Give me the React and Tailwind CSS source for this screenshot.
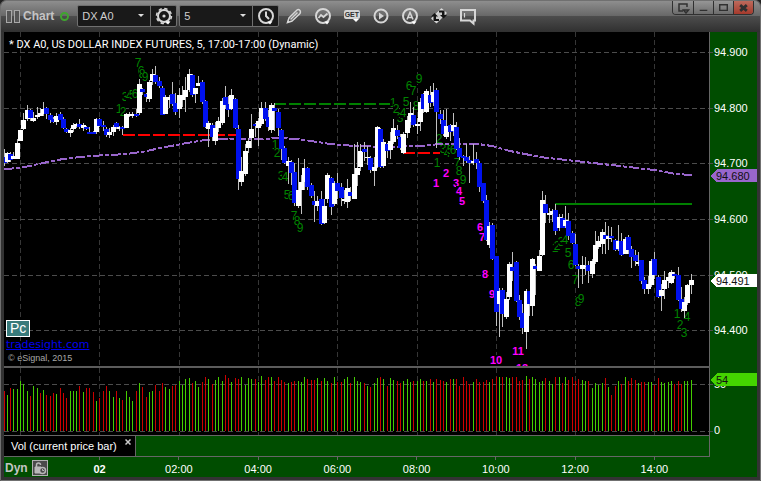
import React, { useState } from "react";
import clsx from "clsx";

const FIRST_X = 4;
const BAR_STEP = 3.304;
const VOLUME_BASE = 431;

// side (u = up, d = down), wick top, body top, body bottom, wick bottom
const candleData = `
d 149 157 163 166,u 152 153 162 163,d 152 154 160 162,u 152 156 159 159,u 139 143 159 159,u 130 130 141 141,
u 113 120 129 130,u 105 110 119 121,d 109 110 118 121,u 112 118 121 122,u 107 115 117 119,u 108 113 116 116,
u 102 109 114 116,d 107 108 114 119,d 113 115 120 123,d 117 119 122 123,u 113 116 122 125,d 112 114 120 120,
d 117 119 128 129,d 128 129 132 133,u 128 130 133 137,u 123 125 129 132,u 123 124 126 128,d 119 124 127 129,
u 123 125 128 131,d 126 127 129 130,d 127 132 134 134,d 131 132 134 134,u 118 119 132 134,d 118 119 126 127,
d 121 125 127 131,d 127 129 135 137,u 128 132 135 138,u 125 127 132 136,d 122 123 127 129,u 126 127 129 131,
d 126 127 129 135,u 113 114 128 128,u 112 114 116 117,u 112 114 116 118,d 109 114 116 117,u 79 84 113 115,
d 88 89 92 95,d 93 94 97 102,u 80 82 99 102,u 69 74 81 85,d 66 75 82 84,d 77 81 86 88,
d 86 88 115 115,u 95 97 114 114,u 95 97 100 108,d 82 94 104 106,d 93 103 112 115,u 88 95 109 118,
u 86 95 100 107,u 77 90 97 112,u 69 74 90 92,d 74 75 95 97,u 88 88 94 103,u 76 83 86 86,
d 80 82 102 104,d 100 101 127 128,u 121 123 129 147,d 123 125 137 141,u 122 128 141 145,u 117 121 128 132,
u 98 101 123 125,d 86 97 105 109,d 96 104 110 117,u 89 95 109 110,d 98 99 128 129,d 125 129 179 190,
u 157 171 182 186,u 144 151 174 176,u 138 141 148 153,u 114 129 138 148,d 123 124 126 137,u 118 121 128 146,
u 102 108 124 126,d 102 108 119 121,d 110 117 127 131,u 103 105 130 133,d 103 108 111 131,d 109 112 128 136,
d 129 130 149 160,d 146 148 163 164,u 157 161 166 184,d 160 162 173 185,d 163 172 203 206,u 158 190 206 208,
u 175 182 190 214,u 159 168 182 190,d 167 168 187 190,d 183 185 196 198,d 191 201 205 222,u 196 201 206 211,
d 191 199 224 225,u 199 206 223 224,u 173 175 199 203,d 177 178 207 215,u 181 183 204 206,d 173 183 191 199,
d 183 187 198 206,u 190 199 201 204,u 179 188 202 208,d 187 192 196 201,u 144 174 199 199,u 142 168 175 186,
u 144 151 167 171,d 142 149 152 161,u 146 157 158 165,d 156 158 170 173,u 157 167 171 186,u 126 127 167 168,
d 128 129 167 168,u 139 142 166 168,d 143 144 151 158,u 132 141 150 159,u 119 128 142 144,d 125 130 136 139,
d 134 137 148 150,u 132 134 153 154,u 116 120 133 138,u 102 113 122 128,d 107 115 125 127,u 118 124 126 134,
u 98 102 122 131,d 93 94 109 113,u 89 91 112 113,d 86 95 103 107,u 83 92 102 106,d 88 90 112 148,
d 110 114 119 124,d 110 120 134 136,u 109 126 137 139,d 124 125 132 141,u 113 125 131 136,d 122 127 149 150,
d 138 148 157 160,d 155 156 158 166,d 144 157 161 163,d 156 160 163 183,u 144 161 163 165,d 152 159 163 169,
d 161 163 187 192,d 183 183 201 203,d 195 200 240 241,u 222 226 245 248,d 223 225 259 260,d 256 256 312 326,
u 288 291 304 337,d 288 290 314 327,u 292 299 317 319,u 262 264 297 300,d 252 267 271 281,d 261 262 301 302,
d 295 300 317 320,d 304 313 328 334,u 289 291 332 349,d 291 291 304 316,u 258 259 306 316,d 264 266 269 295,
u 250 256 271 271,u 191 200 255 256,d 195 204 213 223,u 208 213 215 223,u 209 211 214 222,d 204 210 231 235,
u 214 217 228 231,d 214 218 228 228,u 206 220 226 228,d 213 221 236 240,d 231 233 243 244,d 234 244 265 266,
d 264 266 269 288,u 256 265 269 284,u 257 266 267 275,d 261 265 271 283,u 259 261 274 278,u 231 245 262 264,
u 236 241 247 249,u 229 232 244 254,d 222 235 239 254,u 226 236 239 250,d 227 236 238 242,d 239 240 250 251,
u 225 241 249 251,d 233 241 255 256,u 237 239 254 254,d 235 237 250 254,d 246 249 257 268,d 250 255 261 266,
u 252 262 264 266,d 260 260 281 284,d 277 280 289 294,u 276 284 289 294,u 259 261 285 287,d 252 259 275 279,
d 275 277 297 298,u 284 290 296 311,u 271 280 289 299,u 273 277 281 288,u 270 272 283 284,d 272 274 276 279,
d 267 275 300 301,d 287 299 309 312,u 297 302 311 318,u 284 285 303 305,u 274 280 285 294`;

const candles = candleData.split(",").map((row) => {
  const [side, high, top, bottom, low] = row.trim().split(" ");
  return { side, high: +high, top: +top, bottom: +bottom, low: +low };
});

const volumeData = `
r40 g36 r43 g42 g42 g50 g47 g40 r35 g45 g43 r38 g41 r36 r35 r38 g37 r43 r38 r33 g40 g40 g40 r45 g39 r43 r43 r39 g30 r33
r40 r45 g40 g34 r40 g33 r31 g40 g34 g30 r40 g48 r44 r34 g39 g40 r46 r40 r48 g44 g42 r45 r46 g50 g46 g52 g53 r48 g50 g44
r49 r54 g52 r47 g51 g54 g50 r56 r53 g49 r53 r52 g54 g46 g53 g52 r52 g49 g55 r51 r54 g54 r50 r54 r51 r49 g48 r49 r50 g50
g49 g54 r52 r51 r51 g53 r50 g53 g50 r48 g54 r49 r49 g52 g54 r48 g54 g50 g49 r48 g45 r44 g48 g53 r54 g52 r45 g53 g51 r50
r48 g50 g52 g49 r50 g50 g52 r50 g50 r52 g49 r52 r51 r50 g49 r52 g52 r52 r45 r54 r50 r47 g49 r52 r49 r49 r51 g49 r52 r54
g54 r54 g54 g53 r54 r54 r50 r51 g55 r52 g54 g52 g49 g50 r53 g50 g47 r54 g54 r48 g54 r51 r54 r50 r52 g51 g50 r50 g43 g48
g46 g48 r53 g44 r36 r45 g50 r47 g54 r50 r53 r51 g48 r49 r49 g49 g49 r46 r53 g49 g48 g49 g50 r47 r50 r47 g50 g50 g51`;

const volumes = volumeData
  .trim()
  .split(/\s+/)
  .map((v) => ({ side: v[0], size: Number(v.slice(1)) }));

const average =
  "4,169 20,168 43,163 63,159 90,156 127,154 147,151 160,148 187,143 205,140 230,139 258,139 283,138 305,140 330,144 355,146 390,147 420,146 440,144 478,144 492,146 510,151 540,157 575,161 620,166 654,170 676,174 692,175";

// sequential counts: [text, center x, baseline]
const greenCounts = [
  ["1", 119, 113], ["2", 123, 116], ["3", 125, 101], ["4", 129, 100], ["5", 132, 99], ["6", 135, 98],
  ["7", 138, 67], ["6", 141, 75], ["8", 142, 78], ["9", 145, 81],
  ["1", 275, 149], ["2", 277, 157], ["3", 281, 180], ["4", 285, 181], ["5", 287, 199], ["6", 291, 200],
  ["7", 294, 220], ["8", 297, 225], ["9", 300, 232],
  ["1", 393, 107], ["2", 396, 113], ["3", 400, 122], ["4", 403, 117], ["5", 406, 106], ["6", 409, 90],
  ["7", 413, 95], ["8", 416, 110], ["9", 419, 83],
  ["1", 437, 167], ["2", 439, 143], ["3", 443, 153], ["4", 447, 157], ["5", 450, 154], ["6", 453, 154],
  ["7", 457, 167], ["8", 459, 175], ["9", 463, 184],
  ["1", 555, 252], ["2", 557, 250], ["3", 561, 246], ["4", 565, 244], ["5", 568, 257], ["6", 571, 269],
  ["7", 575, 284], ["8", 578, 306], ["9", 581, 303],
  ["1", 677, 318], ["2", 680, 329], ["3", 684, 337], ["4", 687, 321],
];

const pinkCounts = [
  ["1", 436, 187], ["2", 446, 177], ["3", 456, 187], ["4", 459, 195], ["5", 462, 205], ["6", 480, 231],
  ["7", 482, 241], ["8", 485, 278], ["9", 492, 298], ["10", 496, 364], ["11", 518, 355], ["12", 522, 372],
];

const gridX = [20, 99, 179, 258, 337, 417, 496, 575, 654];
const priceLevels = [
  ["94.900", 52],
  ["94.800", 108],
  ["94.700", 163],
  ["94.600", 219],
  ["94.500", 275],
  ["94.400", 330],
];
const times = ["02", "02:00", "04:00", "06:00", "08:00", "10:00", "12:00", "14:00"];

const barX = (i) => Math.floor(FIRST_X + i * BAR_STEP);

const Counts = ({ items, color, bold }) => (
  <g
    className={clsx(bold ? "text-[11px] font-bold" : "text-[12px]")}
    fill={color}
    textAnchor="middle"
  >
    {items.map(([text, x, y], index) => (
      <g key={index}>
        <rect x={x - 3 * text.length} y={y - 9} width={6 * text.length} height="10" fill="#000" />
        <text x={x} y={y}>
          {text}
        </text>
      </g>
    ))}
  </g>
);

const PriceTag = ({ y, color, label }) => (
  <g>
    <path d={`M710 ${y}L717 ${y - 7}H757V${y + 6}H717Z`} fill={color} />
    <text x="716" y={y + 4} fill="#111">
      {label}
    </text>
  </g>
);

const Chart = () => (
  <svg
    viewBox="4 32 753 403"
    className="block w-full text-[11px]"
    shapeRendering="crispEdges"
    role="img"
    aria-label="US Dollar Index futures"
  >
    <defs>
      <clipPath id="pricePane">
        <rect x="4" y="32" width="705" height="334" />
      </clipPath>
    </defs>
    <rect x="4" y="32" width="706" height="403" fill="#000" />
    <rect x="710" y="32" width="47" height="403" fill="#004d00" />

    <g stroke="#363636" strokeDasharray="5 3">
      {gridX.map((x) => (
        <path key={x} d={`M${x + 0.5} 32V435`} />
      ))}
    </g>
    <g stroke="#4c4c4c" strokeDasharray="5 3">
      {priceLevels.map(([label, y]) => (
        <path key={label} d={`M4 ${y + 0.5}H713`} />
      ))}
      <path d="M4 384.5H713M4 431.5H713" />
    </g>

    <g clipPath="url(#pricePane)">
      <Counts items={greenCounts} color="#008400" />
      <Counts items={pinkCounts} color="#ff00ff" bold />
      <polyline
        points={average}
        fill="none"
        stroke="#9966cc"
        strokeWidth="2"
        strokeDasharray="10 2 4 2"
      />
      <g strokeWidth="2" strokeDasharray="12 3">
        <path d="M123 135H238M403 153H440" stroke="#ff0000" />
        <path d="M274 104H390" stroke="#008000" />
      </g>
      <path d="M555 204H692" stroke="#008000" strokeWidth="2" />
      {candles.map((c, i) => (
        <g key={i}>
          <rect x={barX(i)} y={c.high} width="1" height={c.low - c.high} fill="#c0c0c0" />
          <rect
            x={barX(i) - 2}
            y={c.top}
            width="5"
            height={c.bottom - c.top}
            fill={c.side === "u" ? "#ffffff" : "#0011ee"}
          />
        </g>
      ))}
    </g>

    {volumes.map((v, i) => (
      <rect
        key={i}
        x={barX(i)}
        y={VOLUME_BASE - v.size}
        width="1"
        height={v.size}
        fill={v.side === "g" ? "#44cc00" : "#cc0000"}
      />
    ))}

    <path d="M709.5 32V435" stroke="#666" />
    <rect x="4" y="366" width="706" height="2" fill="#5c5c5c" />

    <text x="9" y="48" fill="#fff" className="font-['Roboto',Arial,sans-serif]">
      * DX A0, US DOLLAR INDEX FUTURES, 5, 17:00-17:00 (Dynamic)
    </text>
    <g fill="#fff">
      {priceLevels.map(([label, y]) => (
        <text key={label} x="714" y={y + 4}>
          {label}
        </text>
      ))}
      <text x="714" y="388">50</text>
      <text x="714" y="434">0</text>
    </g>
    <PriceTag y={176} color="#9966cc" label="94.680" />
    <PriceTag y={281} color="#ffffff" label="94.491" />
    <PriceTag y={380} color="#44d400" label="54" />
  </svg>
);

const Caret = () => (
  <svg
    viewBox="0 0 6 3"
    className="pointer-events-none absolute top-2 right-1.5 h-[3px] w-[6px]"
    fill="#ddd"
  >
    <path d="M0 0H6L3 3Z" />
  </svg>
);

const Dropdown = ({ label, options }) => (
  <label className="relative flex w-[72px]">
    <select
      aria-label={label}
      className="w-full appearance-none bg-transparent pl-1 text-[11px] text-[#cfcfcf] outline-none"
    >
      {options.map((option) => (
        <option key={option}>{option}</option>
      ))}
    </select>
    <Caret />
  </label>
);

const Drop = () => <path d="M11.500 15.500h5l-2.500 3z" fill="#fff" stroke="none" />;

const Icon = ({ children }) => (
  <svg viewBox="0 0 20 20" className="size-5" fill="none" stroke="#d6d6d6" strokeWidth="2">
    {children}
  </svg>
);

const GearIcon = () => (
  <Icon>
    <circle cx="10" cy="10" r="6" strokeWidth="2" />
    <circle cx="10" cy="10" r="7.500" strokeWidth="1.500" strokeDasharray="3.400 2.490" />
    <circle cx="10" cy="10" r="1.600" fill="#d6d6d6" stroke="none" />
    <Drop />
  </Icon>
);

const ClockIcon = () => (
  <Icon>
    <circle cx="10" cy="10" r="7" />
    <path d="M10 5.500V10l3 3" />
    <Drop />
  </Icon>
);

const tools = [
  {
    name: "Draw",
    icon: (
      <Icon>
        <path d="M3.500 16.500L5 12L13 4Q14.500 3 16 4.500Q17 6 16 7.500L8 15ZM6.500 13.500L13.500 6.500" strokeWidth="1.500" />
      </Icon>
    ),
  },
  {
    name: "Studies",
    icon: (
      <Icon>
        <circle cx="10" cy="10" r="7" />
        <path d="M5.500 12L8 9L10.500 11L14.500 7.500" strokeWidth="1.800" />
        <Drop />
      </Icon>
    ),
  },
  {
    name: "GET",
    icon: (
      <span className="flex flex-col items-center">
        <span className="rounded-xs bg-[#d6d6d6] px-px text-[7px] leading-[9px] font-bold text-[#303030]">
          GET
        </span>
        <svg viewBox="0 0 6 3" className="ml-2 h-[3px] w-[6px]" fill="#fff">
          <path d="M0 0H6L3 3Z" />
        </svg>
      </span>
    ),
  },
  {
    name: "Play",
    icon: (
      <Icon>
        <circle cx="10" cy="10" r="6.500" />
        <path d="M8 6.500L13 10L8 13.500Z" fill="#d6d6d6" stroke="none" />
      </Icon>
    ),
  },
  {
    name: "Alerts",
    icon: (
      <Icon>
        <circle cx="10" cy="10" r="7" />
        <path d="M7 13.500L10 6.500L13 13.500M8 11.500H12" strokeWidth="1.600" />
        <Drop />
      </Icon>
    ),
  },
  {
    name: "Link",
    icon: (
      <Icon>
        <path d="M3 12.500L12.500 3L17 7L7.500 16.500Z" fill="#c8c8c8" strokeWidth="1.500" strokeLinejoin="round" />
        <path d="M2 10.500L5.500 7L9 10.500H7V13H10V15H4.500V10.500Z" fill="#141414" stroke="none" />
        <path d="M18 9L14.500 12.500L11 9H13V6.500H10V4.500H15.500V9Z" fill="#141414" stroke="none" />
      </Icon>
    ),
  },
  {
    name: "Note",
    icon: (
      <Icon>
        <path d="M3 4H17V14.500H15.500V17.500L12 14.500H3Z" />
        <path d="M6.500 7V11.500" strokeWidth="1.200" />
      </Icon>
    ),
  },
];

const windowButtons = [
  { name: "Menu", path: "M14 6V3H6V10H10M10.500 9H15.500L13 12Z" },
  { name: "Minimize", path: "M6 9.500H14" },
  { name: "Maximize", path: "M6 3.500H14V9.500H6Z" },
  { name: "Close", path: "M6.500 4L13.500 10M13.500 4L6.500 10" },
];

const Toolbar = () => (
  <header className="flex h-[31px] items-start bg-[linear-gradient(#8e8e8e,#666_50%,#4c4c4c_50%,#303030)]">
    <div className="flex h-[30px] flex-1 items-center">
      <div className="flex gap-[2px] pl-[5px]">
        <span className="h-[13px] w-[6px] border border-[#a8a8a8] bg-[#555]" />
        <span className="h-[13px] w-[6px] border border-[#a8a8a8] bg-[#555]" />
      </div>
      <h1 className="ml-[3px] text-[12px] font-bold text-[#c4c4c4]">Chart</h1>
      <span className="mr-2 ml-1.5 size-[9px] rounded-full border-2 border-[#3fa52f]" />
      <div className="flex h-[22px] rounded-xs border border-[#707070] bg-[#191919]">
        <Dropdown label="Symbol" options={["DX A0"]} />
        <button
          aria-label="Symbol settings"
          className="flex w-[26px] items-center justify-center border-l border-[#707070]"
        >
          <GearIcon />
        </button>
      </div>
      <div className="ml-0.5 flex h-[22px] rounded-xs border border-[#707070] bg-[#191919]">
        <Dropdown label="Interval" options={["5", "15", "60"]} />
        <button
          aria-label="Time template"
          className="flex w-[26px] items-center justify-center border-l border-[#707070]"
        >
          <ClockIcon />
        </button>
      </div>
      {tools.map((tool) => (
        <button
          key={tool.name}
          aria-label={tool.name}
          className="flex w-[29px] items-center justify-center"
        >
          {tool.icon}
        </button>
      ))}
    </div>
    <div className="mr-1.5 flex overflow-hidden rounded-b-sm border border-t-0 border-[#303030]">
      {windowButtons.map((button) => (
        <button
          key={button.name}
          aria-label={button.name}
          className={clsx(
            "flex h-[13px] w-5 items-center justify-center border-l border-[#303030] first:border-l-0",
            button.name === "Close"
              ? "bg-[linear-gradient(#bd6a5c,#a53a2c)]"
              : "bg-[linear-gradient(#969696,#6c6c6c)]"
          )}
        >
          <svg viewBox="0 0 20 14" className="h-3.5 w-5" fill="none" stroke="#303030">
            <path d={button.path} strokeWidth={button.name === "Close" ? 3 : 1.5} />
          </svg>
        </button>
      ))}
    </div>
  </header>
);

const App = () => {
  const [showVolume, setShowVolume] = useState(true);

  return (
    <div className="min-h-screen bg-[#222] font-['Liberation_Sans',Arial,sans-serif]">
      <div className="min-h-screen overflow-hidden rounded-t-md border border-[#707070] bg-[#333]">
        <Toolbar />
        <main className="px-[3px] pb-[3px]">
          <div className="relative">
            <Chart />
            <div className="absolute bottom-[72px] left-0.5 flex flex-col items-start">
              <button className="border border-white bg-[#397b7b] px-[3px] text-[14px] leading-[15px] text-white">
                Pc
              </button>
              <a
                href="#tradesight"
                className="font-['DejaVu_Sans',Verdana,sans-serif] text-[11px] leading-[16px] text-[#0000ee] underline"
              >
                tradesight.com
              </a>
              <p className="pl-0.5 text-[9px] leading-[10px] text-[#a8a8a8]">© eSignal, 2015</p>
            </div>
          </div>

          <div className="grid h-[22px] grid-cols-[706fr_47fr] bg-[#004d00]">
            <div className="flex border-y border-r border-[#666]">
              {showVolume && (
                <div className="flex w-[132px] items-center justify-between border-r border-[#666] bg-black pr-1 pl-[7px] text-[11px] text-white">
                  Vol (current price bar)
                  <button
                    aria-label="Close volume"
                    onClick={() => setShowVolume(false)}
                    className="mb-2 text-[#ccc]"
                  >
                    <svg viewBox="0 0 6 6" className="size-[6px]" stroke="currentColor" strokeWidth="1.500">
                      <path d="M0.500 0.500L5.500 5.500M5.500 0.500L0.500 5.500" />
                    </svg>
                  </button>
                </div>
              )}
            </div>
          </div>

          <div className="grid h-5 grid-cols-[224fr_repeat(8,317fr)_252fr] bg-[#004d00] text-[11px] text-white">
            <div className="flex items-center gap-1 pl-px text-[12px] font-bold text-[#c4c4c4]">
              Dyn
              <button
                aria-label="Lock time scale"
                className="flex size-4 shrink-0 items-center justify-center border border-[#b0b0b0] bg-[#4a4a4a]"
              >
                <svg viewBox="0 0 14 14" className="size-3.5" fill="none" stroke="#b8b8b8">
                  <path d="M3.500 6V4Q3.500 2 5.500 2T7.500 4" strokeWidth="1.500" />
                  <path d="M2 6H8V12H2Z" fill="#b8b8b8" />
                  <circle cx="9.500" cy="9.500" r="3" fill="#4a4a4a" strokeWidth="1.500" />
                  <path d="M9.500 8V9.500H11" />
                </svg>
              </button>
            </div>
            {times.map((time) => (
              <div key={time} className="flex flex-col items-center">
                <span className="h-[3px] w-px bg-[#666]" />
                <span className={clsx("leading-[18px]", time === "02" && "font-bold")}>{time}</span>
              </div>
            ))}
          </div>
        </main>
      </div>
    </div>
  );
};

export default App;
